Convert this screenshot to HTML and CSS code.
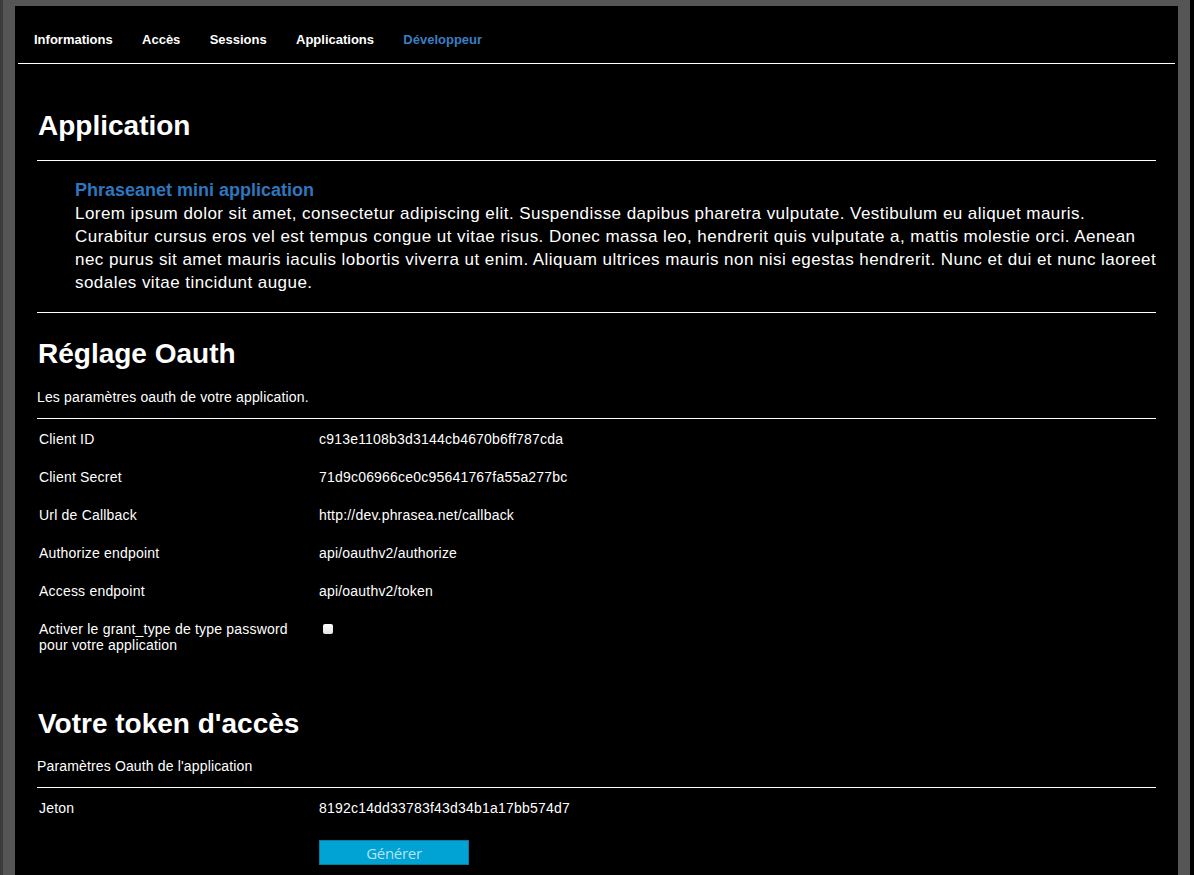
FILE: index.html
```html
<!DOCTYPE html>
<html lang="fr">
<head>
<meta charset="utf-8">
<title>Développeur</title>
<link rel="stylesheet" href="styles.css">
</head>
<body>
<div class="shell">
  <div class="panel">
    <nav class="tabs">
      <a class="tab">Informations</a>
      <a class="tab">Accès</a>
      <a class="tab">Sessions</a>
      <a class="tab">Applications</a>
      <a class="tab active">Développeur</a>
    </nav>
    <div class="content">
      <h1 class="title title-app">Application</h1>
      <div class="app-desc">
        <div class="app-name">Phraseanet mini application</div>
        <p class="app-text">Lorem ipsum dolor sit amet, consectetur adipiscing elit. Suspendisse dapibus pharetra vulputate. Vestibulum eu aliquet mauris. Curabitur cursus eros vel est tempus congue ut vitae risus. Donec massa leo, hendrerit quis vulputate a, mattis molestie orci. Aenean nec purus sit amet mauris iaculis lobortis viverra ut enim. Aliquam ultrices mauris non nisi egestas hendrerit. Nunc et dui et nunc laoreet sodales vitae tincidunt augue.</p>
      </div>

      <h1 class="title title-oauth">Réglage Oauth</h1>
      <p class="sub sub-oauth">Les paramètres oauth de votre application.</p>
      <div class="grid">
        <div class="row"><span class="label">Client ID</span><span class="value">c913e1108b3d3144cb4670b6ff787cda</span></div>
        <div class="row"><span class="label">Client Secret</span><span class="value">71d9c06966ce0c95641767fa55a277bc</span></div>
        <div class="row"><span class="label">Url de Callback</span><span class="value">http://dev.phrasea.net/callback</span></div>
        <div class="row"><span class="label">Authorize endpoint</span><span class="value">api/oauthv2/authorize</span></div>
        <div class="row"><span class="label">Access endpoint</span><span class="value">api/oauthv2/token</span></div>
        <div class="row"><span class="label">Activer le grant_type de type password pour votre application</span><span class="value"><span class="check"></span></span></div>
      </div>

      <h1 class="title title-token">Votre token d'accès</h1>
      <p class="sub sub-token">Paramètres Oauth de l'application</p>
      <div class="grid">
        <div class="row"><span class="label">Jeton</span><span class="value">8192c14dd33783f43d34b1a17bb574d7</span></div>
        <div class="row row-btn"><span class="label"></span><span class="value"><button class="btn" type="button">Générer</button></span></div>
      </div>
    </div>
  </div>
</div>
</body>
</html>
```

FILE: styles.css
```css
html, body {
  margin: 0;
  padding: 0;
}
body {
  background: #555555;
  font-family: "Liberation Sans", Arial, Helvetica, sans-serif;
  color: #ffffff;
  height: 875px;
  overflow: hidden;
}
.shell {
  border-left: 3px solid #3b3b3b;
  border-right: 4px solid #000000;
  padding: 6px 12px 0 12px;
  height: 869px;
}
.panel {
  background: #000000;
  height: 100%;
}
.tabs {
  display: flex;
  gap: 29.3px;
  margin: 0 3px;
  padding: 26px 0 15px 16px;
  border-bottom: 1px solid #ffffff;
}
.tab {
  font-size: 13px;
  line-height: 16px;
  font-weight: bold;
  color: #ffffff;
  text-decoration: none;
}
.tab.active {
  color: #3a7fc4;
}
.content {
  margin: 0 22px;
}
.title {
  margin: 0;
  font-size: 28px;
  line-height: 32px;
  font-weight: bold;
  padding-left: 1px;
}
.title-app {
  margin-top: 46px;
  padding-bottom: 18px;
  border-bottom: 1px solid #ffffff;
}
.app-desc {
  padding: 17px 0 18px 38px;
  border-bottom: 1px solid #ffffff;
  font-size: 17px;
  line-height: 23px;
}
.app-name {
  color: #2e77bf;
  font-weight: bold;
  font-size: 18px;
  line-height: 24px;
}
.app-text {
  margin: 0 -4px 0 0;
  letter-spacing: 0.45px;
}
.title-oauth {
  margin-top: 25px;
}
.title-token {
  margin-top: 45px;
}
.sub {
  margin: 0;
  font-size: 14px;
  line-height: 16px;
  letter-spacing: 0.15px;
  padding-bottom: 13px;
  border-bottom: 1px solid #ffffff;
}
.sub-oauth {
  margin-top: 19px;
}
.sub-token {
  margin-top: 18px;
}
.grid {
  display: flex;
  flex-direction: column;
}
.row {
  display: grid;
  grid-template-columns: 280px 1fr;
  padding: 12px 0 10px;
  font-size: 14px;
  line-height: 16px;
  letter-spacing: 0.2px;
}
.label {
  padding-left: 2px;
  padding-right: 20px;
}
.value {
  padding-left: 2px;
}
.check {
  display: block;
  width: 10px;
  height: 10px;
  margin: 3px 0 0 4px;
  border-radius: 2px;
  background: linear-gradient(#ffffff, #e4e4e4);
}
.row-btn {
  padding-top: 14px;
}
.btn {
  display: block;
  width: 150px;
  height: 25px;
  margin: 0;
  padding: 0;
  border: 1px solid #0b7aa5;
  background: #00a3d3;
  color: #b8e2f2;
  font-family: "Open Sans", sans-serif;
  font-weight: 400;
  font-size: 15px;
  letter-spacing: -0.3px;
  line-height: 22px;
  text-align: center;
}
```
